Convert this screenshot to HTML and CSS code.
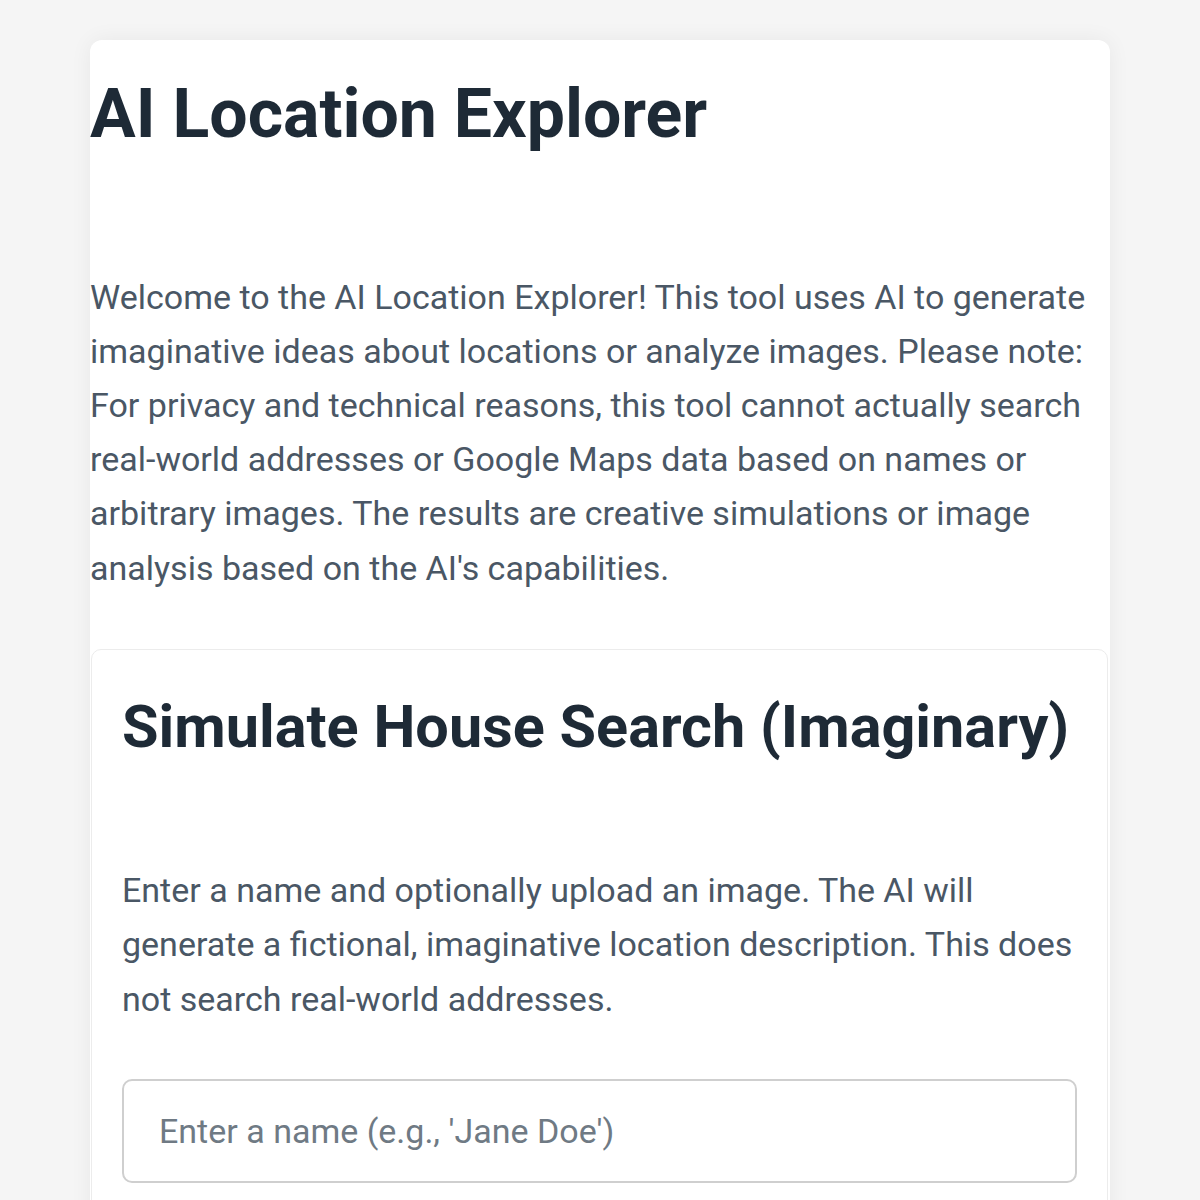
FILE: index.html
```html
<!DOCTYPE html>
<html lang="en">
<head>
<meta charset="utf-8">
<title>AI Location Explorer</title>
<link rel="stylesheet" href="styles.css">
</head>
<body>
<main class="app">
  <h1 class="app-title">AI Location Explorer</h1>
  <p class="intro">Welcome to the AI Location Explorer! This tool uses AI to generate imaginative ideas about locations or analyze images. Please note: For privacy and technical reasons, this tool cannot actually search real-world addresses or Google Maps data based on names or arbitrary images. The results are creative simulations or image analysis based on the AI's capabilities.</p>
  <section class="panel">
    <h2 class="panel-title">Simulate House Search (Imaginary)</h2>
    <p class="panel-text">Enter a name and optionally upload an image. The AI will generate a fictional, imaginative location description. This does not search real-world addresses.</p>
    <input class="name-input" type="text" placeholder="Enter a name (e.g., 'Jane Doe')">
  </section>
</main>
</body>
</html>
```
FILE: styles.css
```css
html, body {
  margin: 0;
  padding: 0;
}

body {
  background: #f5f5f5;
  font-family: Roboto, "Noto Sans", "Liberation Sans", sans-serif;
}

.app {
  width: 1020px;
  margin: 40px auto 0;
  padding: 34px 0 0;
  background: #ffffff;
  border-radius: 12px;
  box-shadow: 0 0 22px rgba(0, 0, 0, 0.06);
  min-height: 1200px;
  box-sizing: border-box;
}

.app-title {
  margin: 0 0 114px;
  font-size: 68px;
  line-height: 1.2;
  font-weight: 700;
  color: #1e2a36;
}

.intro {
  margin: 0 0 54px;
  font-size: 34px;
  line-height: 54.2px;
  color: #4a5765;
}

.panel {
  margin: 0 2px 0 1px;
  padding: 41px 30px 40px;
  border: 1px solid #ececec;
  border-radius: 10px;
  background: #ffffff;
}

.panel-title {
  margin: 0 0 100px;
  font-size: 59.4px;
  line-height: 72px;
  font-weight: 700;
  color: #1e2a36;
  white-space: nowrap;
}

.panel-text {
  margin: 0 0 53px;
  font-size: 34px;
  line-height: 54.4px;
  color: #4a5765;
}

.name-input {
  display: block;
  width: 100%;
  height: 104px;
  box-sizing: border-box;
  padding: 0 35px;
  border: 2px solid #cfcfcf;
  border-radius: 10px;
  font-family: inherit;
  font-size: 34px;
  color: #2c3640;
  background: #ffffff;
}

.name-input::placeholder {
  color: #6f7a84;
}
```
